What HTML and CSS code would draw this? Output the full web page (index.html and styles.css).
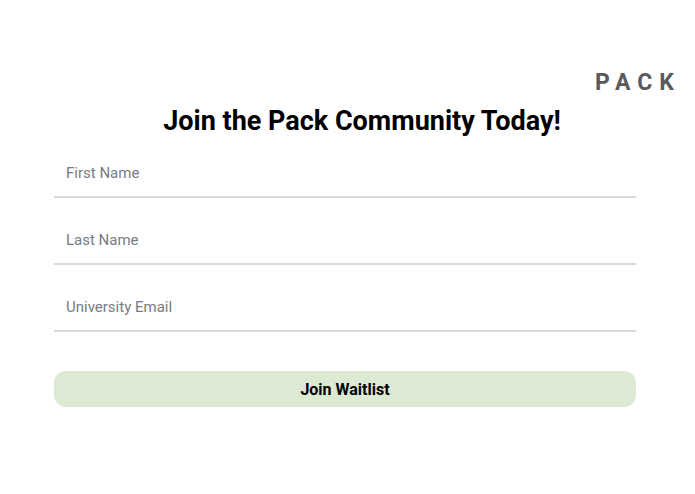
FILE: index.html
```html
<!DOCTYPE html>
<html>
<head>
<meta charset="utf-8">
<link rel="stylesheet" href="styles.css">
</head>
<body>
<div class="page">
  <header class="brand-row">
    <div class="brand">PACK</div>
  </header>
  <h1 class="title">Join the Pack Community Today!</h1>
  <form class="form">
    <div class="field"><input class="input" type="text" placeholder="First Name"></div>
    <div class="field"><input class="input" type="text" placeholder="Last Name"></div>
    <div class="field"><input class="input" type="email" placeholder="University Email"></div>
    <button class="submit" type="button">Join Waitlist</button>
  </form>
</div>
</body>
</html>
```

FILE: styles.css
```css
* { box-sizing: border-box; }
html, body { margin: 0; padding: 0; background: #fff; }
body { font-family: Roboto, "Liberation Sans", sans-serif; }
.page {
  width: 695px;
  height: 494px;
  padding-top: 69px;
}
.brand-row {
  display: flex;
  justify-content: flex-end;
  padding-right: 14px;
}
.brand {
  font-size: 23px;
  font-weight: 700;
  letter-spacing: 7px;
  color: #5a5a5a;
  line-height: 28px;
}
.title {
  margin: 9px 0 0;
  text-align: center;
  font-size: 27px;
  font-weight: 700;
  color: #000;
  line-height: 30px;
  padding-left: 29px;
}
.form {
  margin: 10px 59px 0 54px;
  display: flex;
  flex-direction: column;
}
.field {
  border-bottom: 2px solid #d9d9d9;
  height: 67px;
  display: flex;
  align-items: flex-end;
}
.field:first-child { height: 52px; }
.input {
  width: 100%;
  border: none;
  outline: none;
  font-family: Roboto, "Liberation Sans", sans-serif;
  font-size: 15px;
  padding: 0 12px 14px;
  color: #333;
  background: transparent;
}
.input::placeholder { color: #777c84; }
.submit {
  margin-top: 39px;
  height: 36px;
  border: none;
  border-radius: 12px;
  background: #dce9d3;
  font-family: Roboto, "Liberation Sans", sans-serif;
  font-size: 16px;
  font-weight: 700;
  color: #000;
}
```
